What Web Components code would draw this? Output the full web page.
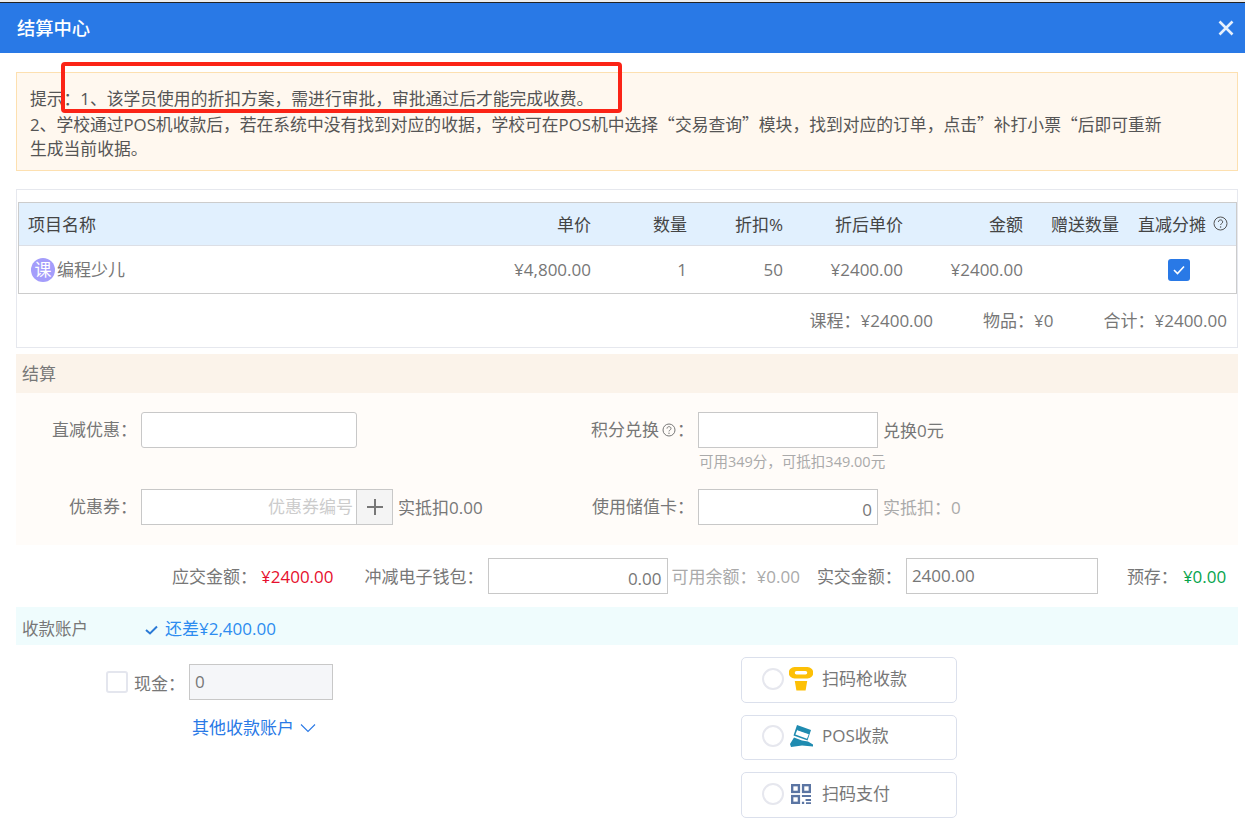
<!DOCTYPE html>
<html lang="zh-CN"><head><meta charset="utf-8"><title>结算中心</title>
<style>
html,body{margin:0;padding:0;background:#fff;height:836px;overflow:hidden}
body{font:17px/1.5 "Open Sans","Noto Sans CJK SC",sans-serif;color:#777}
</style></head><body>
<checkout-dialog></checkout-dialog>
<script>
function def(name,html){
  customElements.define(name,class extends HTMLElement{
    constructor(){super();const r=this.attachShadow({mode:'open'});r.innerHTML=html;}
  });
}
def('dialog-header',`<style>
:host{display:flex;align-items:center;justify-content:space-between;height:50px;border-top:1px solid #222;background:#2979e6;color:#fff;padding:0 9px 0 17px;font-size:18.300px;font-weight:500}
svg{display:block}
</style><span><slot></slot></span><svg width="20" height="20" viewBox="0 0 20 20"><path d="M3.500 3.500 16.500 16.500M16.500 3.500 3.500 16.500" stroke="#e6f0fd" stroke-width="2.600" fill="none"/></svg>`);
def('notice-box',`<style>
:host{display:block;margin:19px 7px 0 16px;height:99px;box-sizing:border-box;border:1px solid #fde0b0;background:#fff8ef;padding:14px 13px 0;color:#555;font-size:16.800px;line-height:24.500px}
</style><slot></slot>`);
def('red-mark',`<style>
:host{position:absolute;left:61px;top:60px;width:561px;height:51px;box-sizing:border-box;border:4px solid #fb2416;border-radius:4px;pointer-events:none}
</style>`);
def('item-cell',`<style>
:host{display:flex;align-items:center;justify-content:flex-end;white-space:nowrap}
:host([left]){justify-content:flex-start;padding-left:9px}
:host([center]){justify-content:center;padding-left:3px}
:host([start]){justify-content:flex-start;padding-left:19px}
</style><slot></slot>`);
def('item-table',`<style>
:host{display:block;margin:12px 0 0 1px;width:1219px;box-sizing:border-box;border:1px solid #ccc;}
.row{display:grid;grid-template-columns:1fr 100px 96px 96px 120px 120px 96px 117px;}
.h{height:42px;box-sizing:content-box;background:#e1f0fe;border-bottom:1px solid #dcdfe6;color:#444}
.h item-cell{padding-top:1px}
.b{height:47px;color:#777}
.ke{display:inline-flex;width:24px;height:24px;border-radius:50%;background:#a49dfb;color:#fff;font-size:17px;align-items:center;justify-content:center;margin:0 2px 0 3px;line-height:1}
.cb{width:22px;height:22px;background:#2979e6;border-radius:3px;display:flex;align-items:center;justify-content:center}
.q{display:inline-block;margin-left:7px;margin-top:-2px}
svg{display:block}
</style>
<div class="row h"><item-cell left>项目名称</item-cell><item-cell>单价</item-cell><item-cell>数量</item-cell><item-cell>折扣%</item-cell><item-cell>折后单价</item-cell><item-cell>金额</item-cell><item-cell>赠送数量</item-cell><item-cell start><span>直减分摊</span><svg class="q" width="15" height="15" viewBox="0 0 15 15"><circle cx="7.500" cy="7.500" r="6.500" fill="none" stroke="#555" stroke-width="1"/><path d="M5.400 6c0-2.800 4.300-2.800 4.300 0 0 1.500-2.100 1.500-2.100 3" fill="none" stroke="#555" stroke-width="1"/><circle cx="7.600" cy="11" r=".7" fill="#555"/></svg></item-cell></div>
<div class="row b"><item-cell left><span class="ke">课</span>编程少儿</item-cell><item-cell>¥4,800.00</item-cell><item-cell>1</item-cell><item-cell>50</item-cell><item-cell>¥2400.00</item-cell><item-cell>¥2400.00</item-cell><item-cell></item-cell><item-cell center><span class="cb"><svg width="14" height="12" viewBox="0 0 14 12"><path d="M2 6 5.500 9.500 12 2.500" fill="none" stroke="#fff" stroke-width="1.600"/></svg></span></item-cell></div>`);
def('items-panel',`<style>
:host{display:block;margin:18px 7px 0 16px;height:159px;box-sizing:border-box;border:1px solid #e6e8ee}
.s{display:flex;justify-content:flex-end;align-items:center;height:53px;padding-right:10px;gap:50px;color:#777}
</style><item-table></item-table><div class="s"><span>课程：¥2400.00</span><span>物品：¥0</span><span>合计：¥2400.00</span></div>`);
def('section-bar',`<style>
:host{display:flex;align-items:center;margin:6px 7px 0 16px;height:39px;padding-left:6px;background:#fbf3ea;color:#777;font-size:17px}
</style><slot></slot>`);
def('text-box',`<style>
:host{display:inline-flex;align-items:center;box-sizing:border-box;height:36px;border:1px solid #c8c8c8;background:var(--tb,#fff);color:#777;padding:0 5px;flex:none}
:host([right]){justify-content:flex-end;padding:5px 5px 0 0}
:host([round]){border-radius:3px}
</style><slot></slot>`);
def('form-field',`<style>
:host{display:flex;align-items:center;flex:none;height:36px;color:#777}
.l{white-space:nowrap;flex:none;width:var(--lw,121px);margin-right:4px;display:flex;justify-content:flex-end;align-items:center}
</style><span class="l"><slot name="label"></slot></span><slot></slot>`);
def('settle-form',`<style>
:host{display:block;margin:0 7px 0 16px;height:152px;box-sizing:border-box;padding-top:19px;background:#fffcf9}
.r{display:flex;height:36px}
.r+.r{margin-top:41px}
.a{width:558px;flex:none}
.n{margin-left:5px;white-space:nowrap;padding-top:1px}
.g{color:#aaa}
.t{position:relative}
.hint{position:absolute;left:125px;top:37px;font-size:14.500px;line-height:26px;color:#aaa;white-space:nowrap}
.ph{color:#ccc}
.plus{display:flex;width:36px;height:36px;box-sizing:border-box;border:1px solid #c8c8c8;border-left:0;background:#f4f4f4;align-items:center;justify-content:center;flex:none}
.lb{display:inline-flex;align-items:center;white-space:nowrap}
svg{display:block;margin:0 1px 0 3px}
svg.pl{margin:0}
</style>
<div class="r"><form-field class="a"><span slot="label">直减优惠：</span><text-box round style="width:216px"></text-box></form-field>
<form-field class="t" style="--lw:120px"><span slot="label" class="lb">积分兑换<svg width="14" height="14" viewBox="0 0 14 14"><circle cx="7" cy="7" r="6" fill="none" stroke="#777"/><path d="M5 5.600c0-2.600 4-2.600 4 0 0 1.400-2 1.400-2 2.800" fill="none" stroke="#777"/><circle cx="7" cy="10.300" r=".7" fill="#777"/></svg>：</span><text-box style="width:180px"></text-box><span class="n">兑换0元</span><span class="hint">可用349分，可抵扣349.00元</span></form-field></div>
<div class="r"><form-field class="a"><span slot="label">优惠券：</span><text-box right style="width:216px;padding-top:0;padding-right:3px"><span class="ph">优惠券编号</span></text-box><span class="plus"><svg class="pl" width="18" height="18" viewBox="0 0 18 18"><path d="M9 1v16M1 9h16" stroke="#777" stroke-width="2"/></svg></span><span class="n">实抵扣0.00</span></form-field>
<form-field style="--lw:120px"><span slot="label">使用储值卡：</span><text-box right style="width:180px">0</text-box><span class="n g">实抵扣：0</span></form-field></div>`);
def('amount-row',`<style>
:host{display:flex;align-items:center;margin:13px 7px 0 16px;height:36px;padding-left:156px;white-space:nowrap;color:#777}
span{padding-top:1px}
.red{color:#e60f2d;margin-left:4px}.gr{color:#aaa;margin-left:4px}.grn{color:#07a44c}
.m1{margin-left:31px}.m3{margin-left:17px}
</style><span>应交金额：</span><span class="red">¥2400.00</span><span class="m1">冲减电子钱包：</span><text-box right style="width:180px;margin-left:4px">0.00</text-box><span class="gr">可用余额：¥0.00</span><span class="m3">实交金额：</span><text-box style="width:192px;margin-left:4px">2400.00</text-box><span style="margin-left:29px">预存：</span><span class="grn" style="margin-left:5px">¥0.00</span>`);
def('account-bar',`<style>
:host{display:flex;align-items:center;margin:13px 7px 0 16px;height:38px;box-sizing:border-box;padding:6px 0 0 6px;background:#effcfd;color:#777;font-size:16.500px}
.c{display:inline-flex;margin-left:56px;align-items:center;color:#2d8cf0;font-size:17px}
svg{display:block;margin-right:6px}
</style><span>收款账户</span><span class="c"><svg width="15" height="15" viewBox="0 0 15 15"><path d="M2 8 6 11.500 13 4.500" fill="none" stroke="#2a7ad6" stroke-width="2"/></svg>还差¥2,400.00</span>`);
def('pay-option',`<style>
:host{display:flex;align-items:center;box-sizing:border-box;width:216px;height:46px;border:1px solid #dbe0ec;border-radius:5px;padding:0 0 3px 20px;color:#777;background:#fff}
.r{width:22px;height:22px;box-sizing:border-box;border:2px solid #e6e7ee;border-radius:50%;flex:none;margin-right:4px}
.i{width:26px;height:26px;flex:none;margin-right:8px;display:flex;align-items:center;justify-content:center}
</style><span class="r"></span><span class="i"><slot name="icon"></slot></span><slot></slot>`);
def('cash-panel',`<style>
:host{display:block;flex:none;width:725px;box-sizing:border-box;padding:7px 0 0 90px}
.r{display:flex;align-items:center;height:36px}
.cb{width:22px;height:22px;box-sizing:border-box;border:2px solid #e4e6ee;border-radius:3px;margin-right:6px;flex:none}
.lb{padding-top:3px}
.more{display:flex;align-items:center;color:#2979e6;margin:16px 0 0 86px;line-height:24px}
svg{display:block;margin-left:6px}
</style><div class="r"><span class="cb"></span><span class="lb">现金：</span><text-box style="width:144px;margin-left:4px;--tb:#f5f6f9">0</text-box></div>
<div class="more">其他收款账户<svg width="16" height="10" viewBox="0 0 16 10"><path d="M1 1.500 8 8.500 15 1.500" fill="none" stroke="#2979e6" stroke-width="1.100"/></svg></div>`);
def('pay-area',`<style>
:host{display:flex;margin:12px 0 0 16px}
.o{display:flex;flex-direction:column}
.o pay-option+pay-option{margin-top:12px}
svg{display:block}
</style><cash-panel></cash-panel><div class="o">
<pay-option><svg slot="icon" width="24" height="24" viewBox="0 0 24 24"><path fill="#fdc006" fill-rule="evenodd" d="M5.500 0h13a5.700 5.700 0 0 1 0 11.500h-13a5.700 5.700 0 0 1 0-11.500zM7.500 4a1.700 1.700 0 0 0 0 3.500h9a1.700 1.700 0 0 0 0-3.500zM5.800 14h12.400L16.600 23.500H7.400z"/></svg>扫码枪收款</pay-option>
<pay-option style="height:45px"><svg slot="icon" width="23" height="22" viewBox="0 0 23 22"><path fill="#1f8bb0" d="M7 0 21 5 17.500 15.500 3.500 10.500z"/><path fill="#fff" d="M7.300 4.700 18.900 8.800 17 13.800 5.400 9.600z"/><path fill="#1f8bb0" d="M7.800 3.700 19.400 7.800 18.900 9.300 7.300 5.200z"/><path fill="#1f8bb0" d="M0 19 4 12.500 12 15.400 18 16.500 23 19.500 23 21.500 12 20.500 1 22z"/></svg>POS收款</pay-option>
<pay-option><svg slot="icon" width="20" height="20" viewBox="0 0 22 22"><g fill="none" stroke="#5b75a3" stroke-width="2.600"><rect x="1.300" y="1.300" width="7.400" height="7.400"/><rect x="13.300" y="1.300" width="7.400" height="7.400"/><rect x="1.300" y="13.300" width="7.400" height="7.400"/></g><path fill="#5b75a3" d="M12 12h10v2.400H12zM12 19.500h2.500V22H12zM16 16.500h6v2.300h-6zM16.500 20h5.500v2h-5.500z"/></svg>扫码支付</pay-option></div>`);
def('checkout-dialog',`<style>
:host{display:block;position:relative;width:1245px;height:836px;box-sizing:border-box;overflow:hidden;background:#fff;border-top:2px solid #ececec}
.q{font-family:"Noto Sans CJK SC",sans-serif}
</style>
<dialog-header>结算中心</dialog-header>
<notice-box>提示：1、该学员使用的折扣方案，需进行审批，审批通过后才能完成收费。<br>2、学校通过POS机收款后，若在系统中没有找到对应的收据，学校可在POS机中选择<span class="q">“</span>交易查询<span class="q">”</span>模块，找到对应的订单，点击<span class="q">”</span>补打小票<span class="q">“</span>后即可重新<br>生成当前收据。</notice-box>
<items-panel></items-panel>
<section-bar>结算</section-bar>
<settle-form></settle-form>
<amount-row></amount-row>
<account-bar></account-bar>
<pay-area></pay-area>
<red-mark></red-mark>`);
</script></body></html>
